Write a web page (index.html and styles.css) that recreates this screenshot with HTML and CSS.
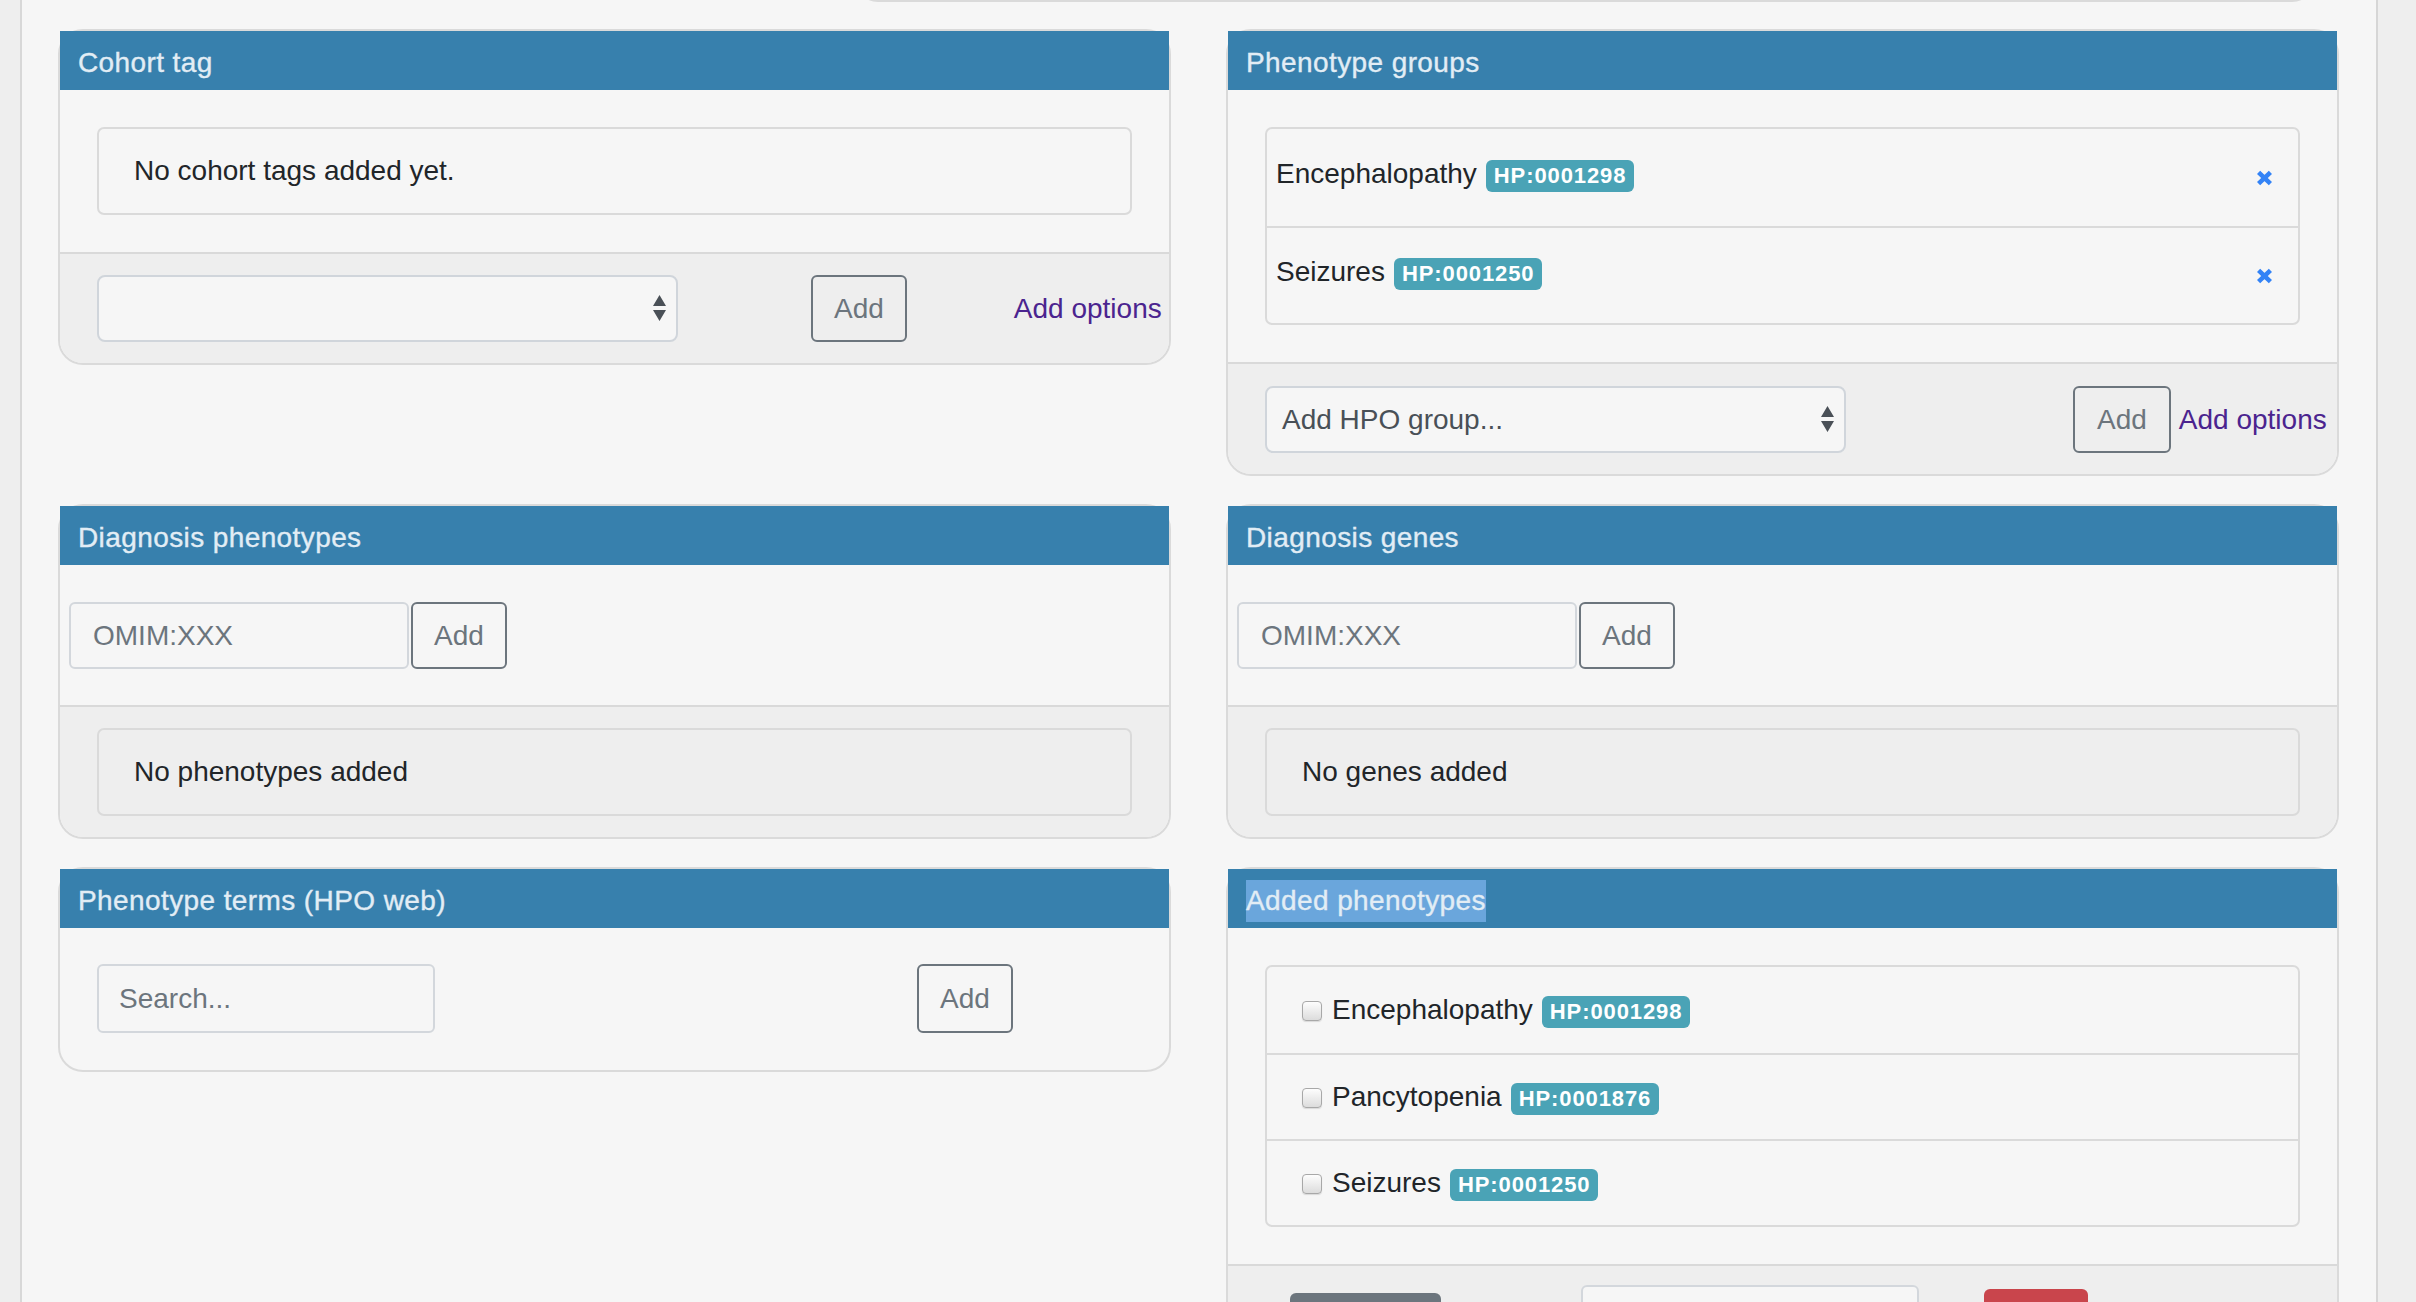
FILE: index.html
```html
<!DOCTYPE html>
<html lang="en">
<head>
<meta charset="utf-8">
<title>Phenotype editor</title>
<link rel="stylesheet" href="styles.css">
</head>
<body>
<div class="app">
  <aside class="side-left"></aside>
  <main class="main">
    <div class="prev-card"></div>
    <div class="grid">

      <section class="card">
        <div class="card-header">Cohort tag</div>
        <div class="card-body">
          <div class="empty-box">No cohort tags added yet.</div>
        </div>
        <div class="card-footer footer-tight">
          <div class="select">
            <span class="select-text"></span>
            <svg class="select-arrows" width="13" height="27" viewBox="0 0 13 27"><path d="M6.5 0 L13 11 L0 11 Z M0 15 L13 15 L6.5 26 Z" fill="#4a5057"/></svg>
          </div>
          <button class="btn-outline btn-cohort">Add</button>
          <a class="link link-cohort" href="#">Add options</a>
        </div>
      </section>

      <section class="card">
        <div class="card-header">Phenotype groups</div>
        <div class="card-body">
          <div class="list">
            <div class="group-row">
              <div class="term-line row-text"><span class="term">Encephalopathy</span><span class="badge">HP:0001298</span></div>
              <svg class="remove" width="17" height="16" viewBox="0 0 17 16"><path d="M2.6 2.4 L14.4 13.6 M14.4 2.4 L2.6 13.6" stroke="#3383f6" stroke-width="4.6" fill="none"/></svg>
            </div>
            <div class="group-row">
              <div class="term-line row-text"><span class="term">Seizures</span><span class="badge">HP:0001250</span></div>
              <svg class="remove" width="17" height="16" viewBox="0 0 17 16"><path d="M2.6 2.4 L14.4 13.6 M14.4 2.4 L2.6 13.6" stroke="#3383f6" stroke-width="4.6" fill="none"/></svg>
            </div>
          </div>
        </div>
        <div class="card-footer footer-wide">
          <div class="select">
            <span class="select-text">Add HPO group...</span>
            <svg class="select-arrows" width="13" height="27" viewBox="0 0 13 27"><path d="M6.5 0 L13 11 L0 11 Z M0 15 L13 15 L6.5 26 Z" fill="#4a5057"/></svg>
          </div>
          <button class="btn-outline btn-groups">Add</button>
          <a class="link link-groups" href="#">Add options</a>
        </div>
      </section>

      <section class="card">
        <div class="card-header">Diagnosis phenotypes</div>
        <div class="card-body body-narrow">
          <input class="text-input omim-input" type="text" placeholder="OMIM:XXX">
          <button class="btn-outline btn-attached">Add</button>
        </div>
        <div class="card-footer footer-box">
          <div class="empty-box">No phenotypes added</div>
        </div>
      </section>

      <section class="card">
        <div class="card-header">Diagnosis genes</div>
        <div class="card-body body-narrow">
          <input class="text-input omim-input" type="text" placeholder="OMIM:XXX">
          <button class="btn-outline btn-attached">Add</button>
        </div>
        <div class="card-footer footer-box">
          <div class="empty-box">No genes added</div>
        </div>
      </section>

      <section class="card">
        <div class="card-header">Phenotype terms (HPO web)</div>
        <div class="card-body body-search">
          <input class="text-input search-input" type="text" placeholder="Search...">
          <button class="btn-outline btn-search">Add</button>
        </div>
      </section>

      <section class="card">
        <div class="card-header"><span class="selected">Added phenotypes</span></div>
        <div class="card-body">
          <div class="list">
            <label class="check-row">
              <span class="checkbox"></span>
              <span class="term-line"><span class="term">Encephalopathy</span><span class="badge">HP:0001298</span></span>
            </label>
            <label class="check-row">
              <span class="checkbox"></span>
              <span class="term-line"><span class="term">Pancytopenia</span><span class="badge">HP:0001876</span></span>
            </label>
            <label class="check-row">
              <span class="checkbox"></span>
              <span class="term-line"><span class="term">Seizures</span><span class="badge">HP:0001250</span></span>
            </label>
          </div>
        </div>
        <div class="card-footer footer-actions">
          <button class="btn-dark"></button>
          <div class="text-input action-input"></div>
          <button class="btn-danger"></button>
        </div>
      </section>

    </div>
  </main>
  <aside class="side-right"></aside>
</div>
</body>
</html>
```

FILE: styles.css
```css
html, body {
  margin: 0;
  padding: 0;
  height: 100%;
  overflow: hidden;
}

body {
  font-family: "Liberation Sans", Arial, sans-serif;
  font-size: 28px;
  line-height: 42px;
  color: #212529;
  background: #f6f6f6;
}

.app {
  display: flex;
  height: 100vh;
}

.side-left {
  flex: none;
  width: 20px;
  background: #eeeeee;
  border-right: 2px solid #d8d8d8;
}

.side-right {
  flex: none;
  width: 38px;
  background: #eeeeee;
  border-left: 2px solid #d6d6d6;
}

.main {
  flex: 1;
  min-width: 0;
  padding: 0 37px 0 36px;
  background: #f6f6f6;
}

.prev-card {
  box-sizing: border-box;
  height: 30px;
  margin-top: -28px;
  margin-left: 795px;
  width: 1464px;
  border: 2px solid #dadada;
  border-top: none;
  border-radius: 0 0 25px 25px;
}

.grid {
  display: grid;
  grid-template-columns: minmax(0, 1fr) minmax(0, 1fr);
  column-gap: 55px;
  row-gap: 28px;
  align-items: start;
  margin-top: 27px;
}

.card {
  min-width: 0;
  border: 2px solid #dadada;
  border-radius: 25px;
}

.card-header {
  box-sizing: border-box;
  height: 59px;
  padding: 5px 18px 0;
  display: flex;
  align-items: center;
  background: #3780ad;
  color: #e2edf5;
  letter-spacing: 0.4px;
  -webkit-text-stroke: 0.35px #e2edf5;
}

.selected {
  display: inline-block;
  line-height: 42px;
  background: #6aa6dc;
}

.card-body {
  padding: 37px;
}

.body-narrow {
  display: flex;
  padding: 37px 9px 36px;
}

.body-search {
  display: flex;
  padding: 36px 37px 37px;
}

.card-footer {
  background: #eeeeee;
  border-top: 2px solid #d9d9d9;
  border-radius: 0 0 23px 23px;
}

.footer-tight {
  display: flex;
  align-items: center;
  padding: 21px 37px;
}

.footer-wide {
  display: flex;
  align-items: center;
  padding: 22px 37px 21px;
}

.footer-box {
  padding: 21px 37px;
}

.footer-actions {
  display: flex;
  align-items: flex-start;
  padding: 19px 37px 40px 62px;
}

.empty-box {
  border: 2px solid #dadada;
  border-radius: 7px;
  padding: 21px 36px 21px 35px;
}

.select {
  box-sizing: border-box;
  flex: none;
  width: 581px;
  height: 67px;
  display: flex;
  align-items: center;
  padding: 0 10px 0 15px;
  border: 2px solid #d0d5db;
  border-radius: 8px;
  background: #f6f6f6;
  color: #495057;
}

.select-arrows {
  margin-left: auto;
  flex: none;
}

.btn-outline {
  box-sizing: border-box;
  flex: none;
  height: 67px;
  padding: 0 21px;
  border: 2px solid #6c757d;
  border-radius: 6px;
  background: transparent;
  color: #6c757d;
  font-family: "Liberation Sans", Arial, sans-serif;
  font-size: 28px;
  line-height: 42px;
}

.btn-cohort {
  margin-left: 133px;
}

.btn-groups {
  margin-left: 227px;
  padding: 0 22px;
}

.btn-attached {
  margin-left: 2px;
}

.btn-search {
  margin-left: 482px;
  height: 69px;
}

.link {
  flex: none;
  color: #4b248f;
  text-decoration: none;
  white-space: nowrap;
}

.link-cohort {
  margin-left: 107px;
}

.link-groups {
  margin-left: 8px;
}

.text-input {
  box-sizing: border-box;
  flex: none;
  height: 67px;
  border: 2px solid #d3d7dc;
  border-radius: 6px;
  background: #f6f6f6;
  font-family: "Liberation Sans", Arial, sans-serif;
  font-size: 28px;
  color: #495057;
  outline: none;
}

.text-input::placeholder {
  color: #6c757d;
}

.omim-input {
  width: 340px;
  padding: 0 22px;
}

.search-input {
  width: 338px;
  height: 69px;
  padding: 0 20px;
}

.list {
  border: 2px solid #dadada;
  border-radius: 7px;
}

.group-row {
  box-sizing: border-box;
  min-height: 97px;
  display: flex;
  align-items: center;
  padding: 0 25px 0 9px;
}

.group-row + .group-row {
  border-top: 2px solid #dadada;
}

.row-text {
  margin-bottom: 8px;
}

.remove {
  margin-left: auto;
  flex: none;
}

.term-line {
  display: flex;
  align-items: baseline;
  gap: 9px;
}

.badge {
  display: inline-block;
  padding: 5px 8px;
  font-size: 22px;
  line-height: 22px;
  font-weight: 700;
  letter-spacing: 0.9px;
  color: #ffffff;
  background: #4aa3b6;
  border-radius: 6px;
}

.check-row {
  box-sizing: border-box;
  min-height: 86px;
  display: flex;
  align-items: center;
  padding: 0 35px;
}

.check-row + .check-row {
  border-top: 2px solid #dadada;
}

.checkbox {
  box-sizing: border-box;
  flex: none;
  width: 20px;
  height: 20px;
  margin: 2px 10px 0 0;
  border: 1px solid #a8a8a8;
  border-radius: 4px;
  background: linear-gradient(#fdfdfd, #dcdcdc);
  box-shadow: 0 1px 1px rgba(0, 0, 0, 0.12);
}

.btn-dark {
  flex: none;
  width: 151px;
  height: 66px;
  margin-top: 8px;
  border: none;
  border-radius: 6px;
  background: #6c757d;
}

.action-input {
  width: 338px;
  height: 70px;
  margin-left: 140px;
}

.btn-danger {
  flex: none;
  width: 104px;
  height: 66px;
  margin-top: 4px;
  margin-left: 65px;
  border: none;
  border-radius: 6px;
  background: #c9454c;
}
```
